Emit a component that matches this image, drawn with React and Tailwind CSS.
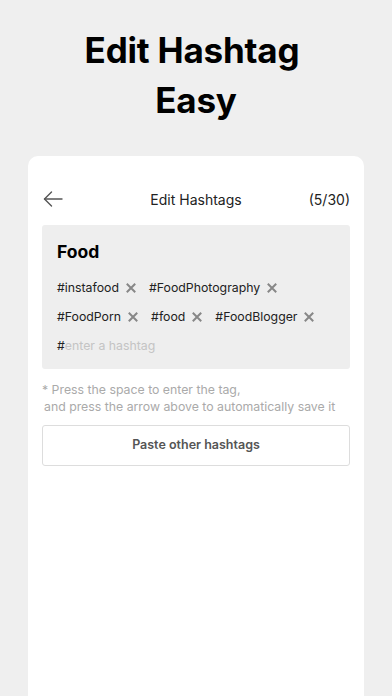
const tags = ["#instafood", "#FoodPhotography", "#FoodPorn", "#food", "#FoodBlogger"];

function BackArrow() {
  return (
    <svg width="20" height="16" viewBox="0 0 20 16" fill="none" stroke="#555" strokeWidth="1.4" strokeLinecap="round" strokeLinejoin="round">
      <path d="M19 8H1.5" />
      <path d="M8.5 1L1.5 8l7 7" />
    </svg>
  );
}

function Cross() {
  return (
    <svg width="10" height="10" viewBox="0 0 10 10" fill="none" stroke="#878787" strokeWidth="2" strokeLinecap="square">
      <path d="M1.5 1.5l7 7M8.5 1.5l-7 7" />
    </svg>
  );
}

function Tag({ label }) {
  return (
    <div className="flex items-center mr-[13px]">
      <span className="text-[12.3px] text-[#222]">{label}</span>
      <span className="ml-[7px] flex">
        <Cross />
      </span>
    </div>
  );
}

export default function App() {
  return (
    <div
      className="min-h-[696px] flex flex-col bg-[#efefef]"
      style={{ fontFamily: "Inter, 'Noto Sans', sans-serif" }}
    >
      {/* headline */}
      <div className="pt-[25px] text-center text-[35px] leading-[50px] font-bold text-black tracking-[-0.2px]">
        <p className="pr-[8px]">Edit Hashtag</p>
        <p>Easy</p>
      </div>

      {/* card */}
      <div className="mt-[31px] mx-[28px] flex-1 bg-white rounded-t-[10px] px-[14px] pt-[31px]">
        <div className="flex items-center justify-between h-[24px]">
          <div className="w-[60px] pl-[1px]">
            <BackArrow />
          </div>
          <span className="text-[14px] text-[#222]">Edit Hashtags</span>
          <span className="w-[60px] text-right text-[14px] text-[#222]">(5/30)</span>
        </div>

        <div className="mt-[14px] bg-[#eeeeee] rounded-[3px] px-[15px] pt-[15px] pb-[9px]">
          <p className="text-[17.5px] leading-[24px] font-bold text-black">Food</p>
          <div className="mt-[9px] flex flex-wrap leading-[29px]">
            <Tag label={tags[0]} />
            <Tag label={tags[1]} />
            <div className="basis-full h-0" />
            <Tag label={tags[2]} />
            <Tag label={tags[3]} />
            <Tag label={tags[4]} />
          </div>
          <p className="text-[12.3px] leading-[29px]">
            <span className="text-[#222]">#</span>
            <span className="text-[#c4c4c4]">enter a hashtag</span>
          </p>
        </div>

        <div className="mt-[12px] text-[12.3px] leading-[17px] text-[#aaa]">
          <p>* Press the space to enter the tag,</p>
          <p className="pl-[2px]">and press the arrow above to automatically save it</p>
        </div>

        <button className="mt-[10px] w-full h-[41px] border border-[#dddddd] rounded-[3px] bg-white text-[12.5px] font-semibold text-[#555]">
          Paste other hashtags
        </button>
      </div>
    </div>
  );
}
